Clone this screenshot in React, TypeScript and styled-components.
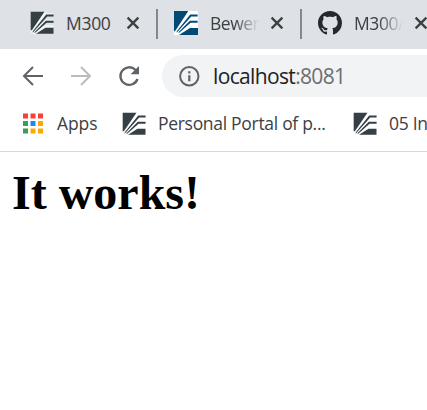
import React from "react";
import styled, { createGlobalStyle } from "styled-components";

const Global = createGlobalStyle`
  html, body { margin: 0; background: #fff; overflow: hidden; }
  svg { display: block; flex: none; }
`;
const Browser = styled.div`
  width: 427px;
  height: 410px;
  overflow: hidden;
  font-family: "Open Sans", "Noto Sans", sans-serif;
  color: #3c4043;
`;
const TabStrip = styled.div`
  display: flex;
  height: 49px;
  background: #dee1e6;
`;
const Tab = styled.div`
  box-sizing: border-box;
  display: flex;
  flex: none;
  width: 144px;
  height: 46px;
  padding-left: 18px;
  align-items: center;
  &:first-child { width: 156px; padding-left: 30px; }
  & + & { background: linear-gradient(#84888d, #84888d) 0 9px / 2px 30px no-repeat; }
`;
const Label = styled.span<{ $spacing?: number; $fade?: boolean }>`
  flex: none;
  font-size: 17.5px;
  line-height: 24px;
  letter-spacing: ${(p) => p.$spacing ?? -0.3}px;
  white-space: nowrap;
  ${(p) => p.$fade && "mask-image: linear-gradient(to right, #000 50%, transparent 100%);"}
`;
const TabLabel = styled(Label)`
  width: 49px;
  margin-left: 12px;
  margin-right: 11px;
`;
const Toolbar = styled.div`
  display: flex;
  align-items: center;
  height: 54px;
  padding-left: 21px;
  gap: 24px;
`;
const AddressBar = styled.div`
  box-sizing: border-box;
  display: flex;
  flex: 1;
  align-items: center;
  height: 42px;
  margin-left: -3px;
  padding-left: 16px;
  gap: 11px;
  border-radius: 21px 0 0 21px;
  background: #f1f3f4;
`;
const Url = styled.span`
  font-size: 21px;
  line-height: 28px;
  letter-spacing: -0.65px;
  color: #202124;
`;
const Port = styled.span`
  color: #6b6f73;
`;
const Bookmarks = styled.div`
  box-sizing: border-box;
  display: flex;
  height: 49px;
  padding: 0 0 7px 21px;
  align-items: center;
  border-bottom: 1px solid #d6d8da;
`;
const Bookmark = styled.div<{ $width: number }>`
  display: flex;
  flex: none;
  align-items: center;
  gap: 12px;
  width: ${(p) => p.$width}px;
`;
const BookmarkLabel = styled(Label)`
  padding-bottom: 2px;
`;
const Page = styled.main`
  padding: 13px 12px;
`;
const Heading = styled.h1`
  margin: 0;
  font: bold 48px/55px "Liberation Serif", "Times New Roman", serif;
  color: #000;
`;

const SchoolLogo = ({ blue = false }) => (
  <svg width="24" height="24" viewBox="0 0 24 24">
    {blue && <path d="M0 0H24V24H0Z" fill="#fff" />}
    {!blue && (
      <path
        d="M15.5 1L1 21M23.3 3.5H17L1.5 22M23.3 9.8H16.5L2.5 22.5M23.3 15.5H15.5L4 22.5"
        fill="none"
        stroke="#fff"
        strokeWidth="2.5"
        opacity="0.65"
      />
    )}
    <g fill={blue ? "#004a74" : "#343f46"}>
      <path d={blue ? "M0 0H14.3L1.5 19.5L0 20.5Z" : "M0.7 0.7H14.5L2 19L0.7 19.5Z"} />
      <path d="M2.8 20.2L16.2 3.5H23.6V5.5H17.2L3.8 20.6L2.6 21.7Z" />
      <path d="M4.2 21.4L15.8 9.7H23.6V11.7H16.6L5.2 21.8Z" />
      <path d={blue ? "M5 24L16 17H24V24Z" : "M6 22.8L15.5 16.7H23.5V22.8Z"} />
    </g>
  </svg>
);
const Close = () => (
  <svg width="14" height="14" viewBox="0 0 14 14">
    <path d="M1.6 1.6L12.4 12.4M12.4 1.6L1.6 12.4" stroke="#3c4043" strokeWidth="2.3" />
  </svg>
);
const Arrow = ({ forward = false }) => (
  <svg width="24" height="24" viewBox="0 0 24 24">
    <path
      d={forward ? "M2 12H21M12 3L21 12L12 21" : "M22 12H3M12 3L3 12L12 21"}
      fill="none"
      stroke={forward ? "#babcbe" : "#5f6368"}
      strokeWidth="2"
    />
  </svg>
);
const Reload = () => (
  <svg width="24" height="24" viewBox="0 0 24 24">
    <path d="M20.5 15A8.8 8.8 0 1 1 18.4 5.8L20 7.5" fill="none" stroke="#5f6368" strokeWidth="2.3" />
    <path d="M22 2V10.2H13.5Z" fill="#5f6368" />
  </svg>
);
const Info = () => (
  <svg width="24" height="24" viewBox="0 0 24 24">
    <circle cx="11.3" cy="12.3" r="9.2" fill="none" stroke="#5f6368" strokeWidth="2" />
    <path d="M10.2 11.3h2.2v6h-2.2zM10.2 7.3h2.2v2.2h-2.2z" fill="#5f6368" />
  </svg>
);
const GitHub = () => (
  <svg width="24" height="24" viewBox="0 0 16 16">
    <path
      fill="#24292e"
      d="M8 0C3.58 0 0 3.58 0 8c0 3.54 2.29 6.53 5.47 7.59.4.07.55-.17.55-.38 0-.19-.01-.82-.01-1.49-2.01.37-2.53-.49-2.69-.94-.09-.23-.48-.94-.82-1.13-.28-.15-.68-.52-.01-.53.63-.01 1.08.58 1.23.82.72 1.21 1.87.87 2.33.66.07-.52.28-.87.51-1.07-1.78-.2-3.64-.89-3.64-3.95 0-.87.31-1.59.82-2.15-.08-.2-.36-1.02.08-2.12 0 0 .67-.21 2.2.82.64-.18 1.32-.27 2-.27s1.36.09 2 .27c1.53-1.04 2.2-.82 2.2-.82.44 1.1.16 1.92.08 2.12.51.56.82 1.27.82 2.15 0 3.07-1.87 3.75-3.65 3.95.29.25.54.73.54 1.48 0 1.07-.01 1.93-.01 2.2 0 .21.15.46.55.38A8.01 8.01 0 0 0 16 8c0-4.42-3.58-8-8-8Z"
    />
  </svg>
);
const appColors = ["#f44336", "#f44336", "#f44336", "#34a05a", "#1e88f5", "#f9ab00", "#34a05a", "#f9ab00", "#f9ab00"];
const Apps = () => (
  <svg width="24" height="24" viewBox="0 0 24 24">
    {appColors.map((c, i) => (
      <rect key={i} x={2 + (i % 3) * 7.5} y={1.5 + Math.floor(i / 3) * 7.5} width="5" height="5" fill={c} />
    ))}
  </svg>
);

export default function App() {
  return (
    <>
      <Global />
      <Browser>
        <TabStrip>
          <Tab><SchoolLogo /><TabLabel>M300</TabLabel><Close /></Tab>
          <Tab><SchoolLogo blue /><TabLabel $fade $spacing={-0.5}>Bewer</TabLabel><Close /></Tab>
          <Tab><GitHub /><TabLabel $fade $spacing={-0.4}>M300/</TabLabel><Close /></Tab>
        </TabStrip>
        <Toolbar>
          <Arrow />
          <Arrow forward />
          <Reload />
          <AddressBar><Info /><Url>localhost<Port>:8081</Port></Url></AddressBar>
        </Toolbar>
        <Bookmarks>
          <Bookmark $width={101}><Apps /><BookmarkLabel $spacing={-0.1}>Apps</BookmarkLabel></Bookmark>
          <Bookmark $width={231}><SchoolLogo /><BookmarkLabel>Personal Portal of p...</BookmarkLabel></Bookmark>
          <Bookmark $width={74}><SchoolLogo /><BookmarkLabel>05 In</BookmarkLabel></Bookmark>
        </Bookmarks>
        <Page><Heading>It works!</Heading></Page>
      </Browser>
    </>
  );
}
